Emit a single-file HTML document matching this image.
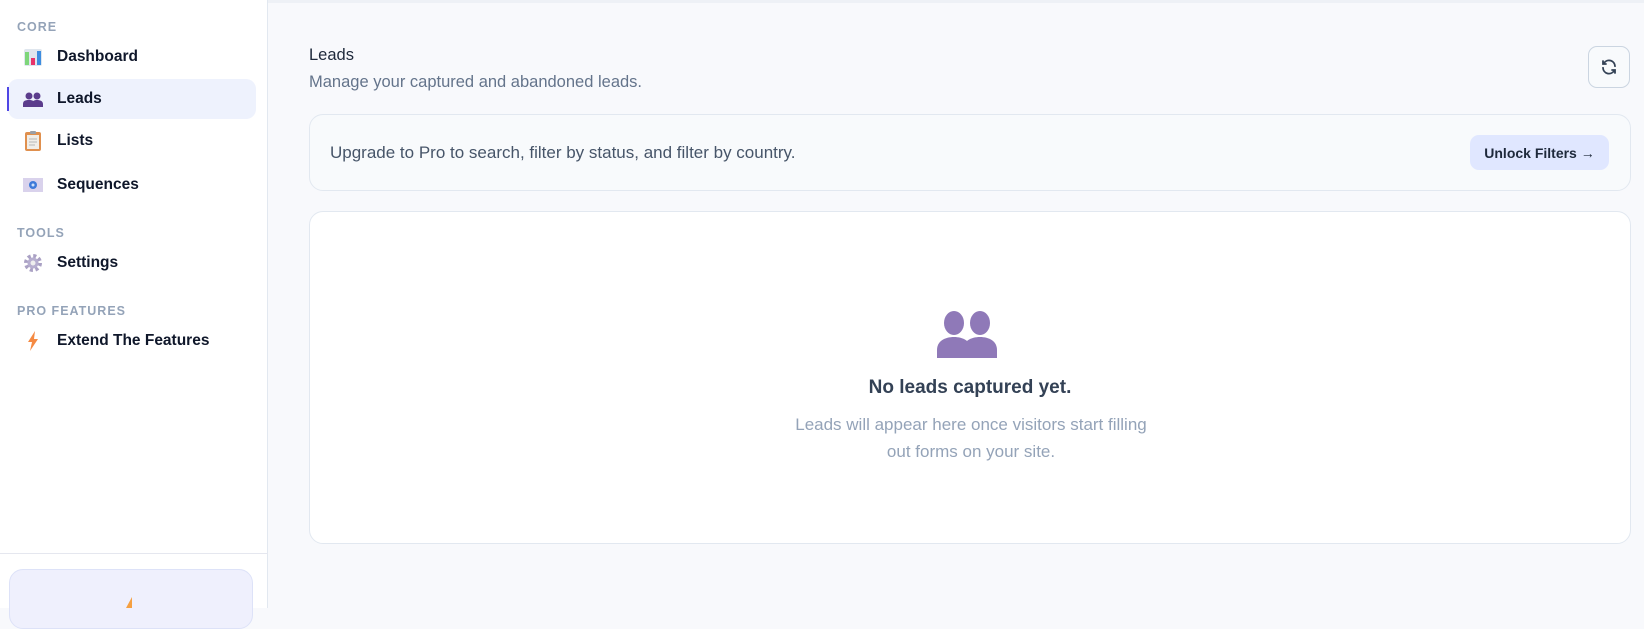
<!DOCTYPE html>
<html><head><meta charset="utf-8"><style>
*{box-sizing:border-box;margin:0;padding:0}
body{width:1644px;height:608px;overflow:hidden;font-family:"Liberation Sans",sans-serif;background:#f8f9fc;position:relative}
.side{position:absolute;left:0;top:0;width:268px;height:608px;background:#fff;border-right:1px solid #e2e8f0}
.topline{position:absolute;left:0;top:0;width:1644px;height:3px;background:#eef1f6}
.lab{position:absolute;left:17px;font-size:12.5px;font-weight:bold;color:#94a3b8;letter-spacing:1px}
.it{position:absolute;left:8px;width:248px;height:40px;display:flex;align-items:center;font-size:15.5px;font-weight:bold;color:#0f172a}
.it .ic{width:20px;height:20px;margin-left:15px;margin-right:14px;display:flex;align-items:center;justify-content:center}
.act{background:#eef2fd;border-radius:10px}
.act:before{content:"";position:absolute;left:-1px;top:8px;width:2px;height:24px;background:#4f46e5}
.main{position:absolute;left:268px;top:0;width:1376px;height:608px;white-space:nowrap}
</style></head><body>
<div class="topline"></div>
<div class="side">
<div class="lab" style="top:20px">CORE</div>
<div class="it" style="top:37px"><span class="ic"><svg width="20" height="20"><rect x="1" y="2" width="18" height="17" rx="2" fill="#dfe6ee"/><rect x="2" y="5" width="4" height="13" fill="#7ed67a"/><rect x="8" y="11" width="4" height="7" fill="#e8336a"/><rect x="14" y="4" width="4" height="14" fill="#3d8de0"/></svg></span>Dashboard</div>
<div class="it act" style="top:79px"><span class="ic"><svg width="20" height="16"><circle cx="6" cy="5" r="3.5" fill="#5b3c8c"/><circle cx="14" cy="5" r="3.5" fill="#5b3c8c"/><path d="M0 16v-3c0-3 2-4 6-4s5 1 5 4v3zM9 16v-3c0-3 2-4 5-4s6 1 6 4v3z" fill="#5b3c8c"/></svg></span>Leads</div>
<div class="it" style="top:121px"><span class="ic"><svg width="18" height="22"><rect x="1" y="2" width="16" height="19" rx="2" fill="#e0904e"/><rect x="3" y="5" width="12" height="14" fill="#f1eee8"/><rect x="6" y="1" width="6" height="3" rx="1" fill="#9aa0a8"/><path d="M5 9h8M5 12h8M5 15h6" stroke="#b8b8b8"/></svg></span>Lists</div>
<div class="it" style="top:165px"><span class="ic"><svg width="20" height="14"><rect x="0" y="0" width="20" height="14" fill="#d9d2ec"/><circle cx="10" cy="7" r="4" fill="#3e7ad9"/><circle cx="10" cy="7" r="1.5" fill="#cfe0fa"/></svg></span>Sequences</div>
<div class="lab" style="top:226px">TOOLS</div>
<div class="it" style="top:243px"><span class="ic"><svg width="20" height="20"><circle cx="10" cy="10" r="7" fill="none" stroke="#aaa1c4" stroke-width="4" stroke-dasharray="3 2.5"/><circle cx="10" cy="10" r="5.5" fill="#b6aecf"/><circle cx="10" cy="10" r="2.5" fill="#eee"/></svg></span>Settings</div>
<div class="lab" style="top:304px">PRO FEATURES</div>
<div class="it" style="top:321px"><span class="ic"><svg width="12" height="20"><path d="M8 0L1 11h4l-2 9 8-12H7z" fill="#f58a42"/></svg></span>Extend The Features</div>
<div style="position:absolute;left:0;top:553px;width:268px;height:1px;background:#e5e7ef"></div>
<div style="position:absolute;left:9px;top:569px;width:244px;height:60px;border-radius:14px;background:#eff0fd;border:1px solid #dde2f8"></div>
<svg style="position:absolute;left:122px;top:597px" width="12" height="11"><path d="M10 0L4 11h6z" fill="#f5a042"/></svg>
</div>
<div class="main">
<div style="position:absolute;left:41px;top:46px;font-size:16.5px;color:#1e293b">Leads</div>
<div style="position:absolute;left:41px;top:73px;font-size:16.5px;color:#64748b">Manage your captured and abandoned leads.</div>
<div style="position:absolute;left:1320px;top:46px;width:42px;height:42px;border:1px solid #cbd5e1;border-radius:9px;background:#f8fafc;display:flex;align-items:center;justify-content:center"><svg width="18" height="18" viewBox="0 0 24 24" fill="none" stroke="#334155" stroke-width="2.4" stroke-linecap="round"><path d="M20 11a8 8 0 0 0-14.5-4.5M4 4v4h4"/><path d="M4 13a8 8 0 0 0 14.5 4.5M20 20v-4h-4"/></svg></div>
<div style="position:absolute;left:41px;top:114px;width:1322px;height:77px;border:1px solid #e2e8f0;border-radius:14px;background:#f8fafc">
<div style="position:absolute;left:20px;top:28px;font-size:17px;color:#475569">Upgrade to Pro to search, filter by status, and filter by country.</div>
<div style="position:absolute;left:1160px;top:20px;width:139px;height:35px;border-radius:9px;background:#e0e7ff;font-size:14px;font-weight:bold;color:#1e293b;display:flex;align-items:center;justify-content:center">Unlock Filters →</div>
</div>
<div style="position:absolute;left:41px;top:211px;width:1322px;height:333px;border:1px solid #e2e8f0;border-radius:14px;background:#fff;white-space:normal">
<svg style="position:absolute;left:627px;top:98px" width="60" height="48" viewBox="0 0 60 48"><g fill="#8f79b8"><ellipse cx="17" cy="13" rx="10" ry="12"/><path d="M0 48v-8c0-9 8-13 17-13s17 4 17 13v8z"/><ellipse cx="43" cy="13" rx="10" ry="12"/><path d="M26 48v-8c0-9 8-13 17-13s17 4 17 13v8z"/></g></svg>
<div style="position:absolute;left:0;width:100%;top:165px;text-align:center;font-size:19px;font-weight:bold;color:#334155">No leads captured yet.</div>
<div style="position:absolute;left:473px;width:376px;top:199px;text-align:center;font-size:17px;line-height:27px;color:#94a3b8">Leads will appear here once visitors start filling out forms on your site.</div>
</div>
</div>
</body></html>
